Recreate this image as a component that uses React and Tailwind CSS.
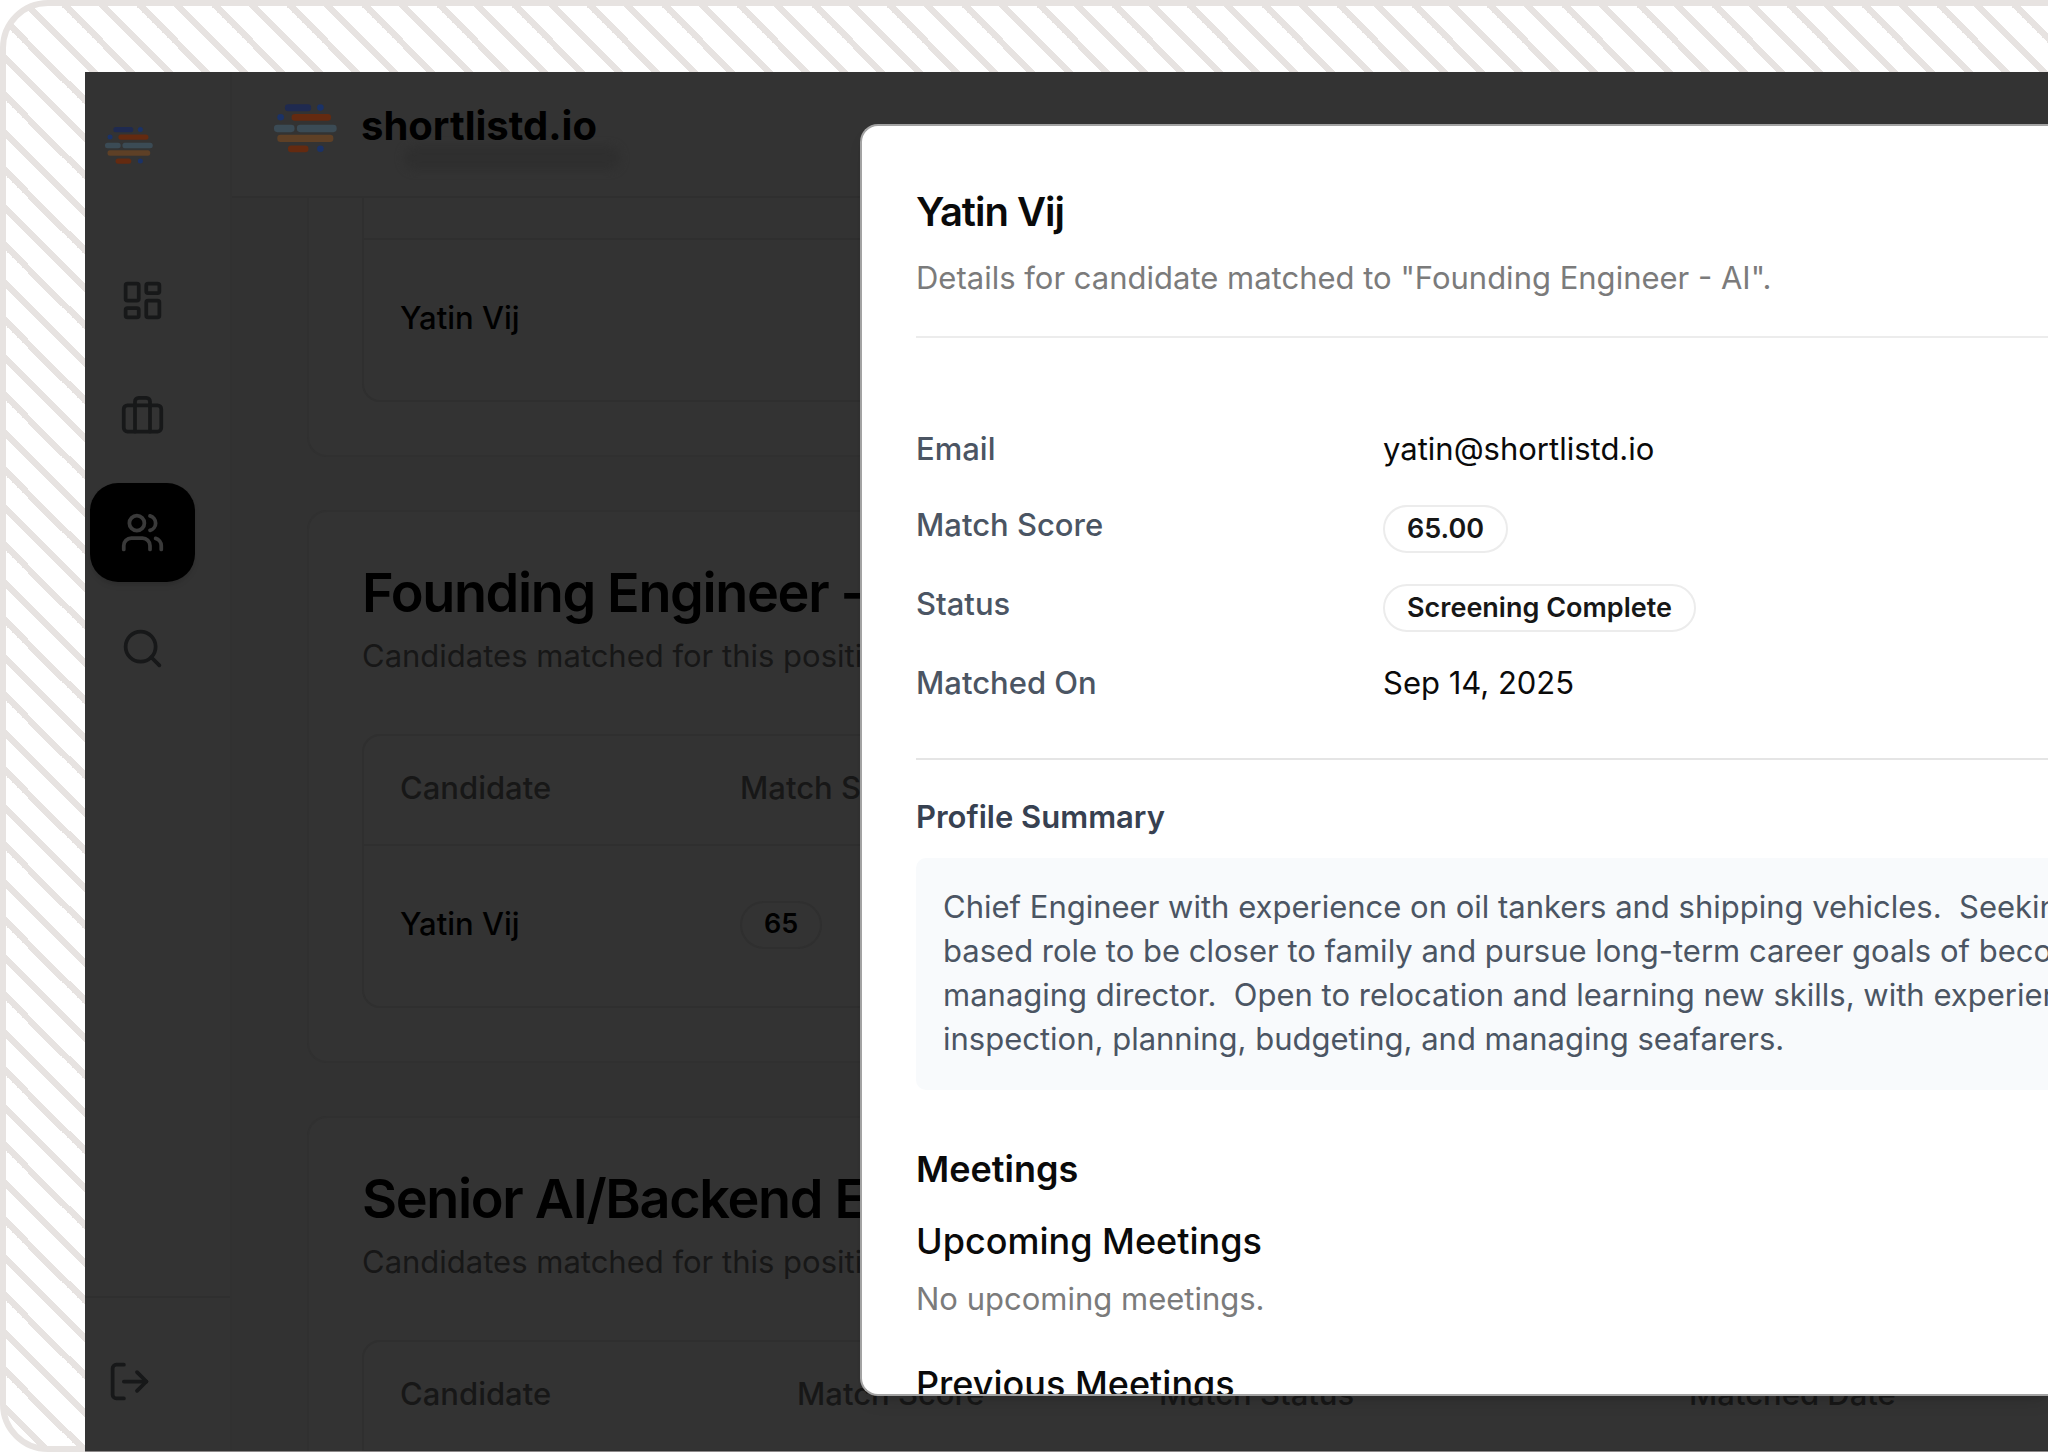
import { LayoutDashboard, Briefcase, Users, Search, LogOut } from "lucide-react";

const navItems = [
  { label: "Dashboard", icon: LayoutDashboard },
  { label: "Jobs", icon: Briefcase },
  { label: "Candidates", icon: Users, active: true },
  { label: "Search", icon: Search },
];

const Logo = ({ className }) => (
  <svg viewBox="0 0 190 146" className={className} aria-hidden="true">
    <rect x="33" y="0" width="79" height="21" rx="10" fill="#1f2a50" />
    <circle cx="140" cy="10" r="10" fill="#1b3266" />
    <circle cx="20" cy="39" r="10" fill="#1b3266" />
    <rect x="53" y="29" width="119" height="21" rx="10" fill="#642a10" />
    <rect x="0" y="62" width="62" height="22" rx="10" fill="#3b4b55" />
    <rect x="69" y="62" width="120" height="22" rx="10" fill="#3b4b55" />
    <rect x="10" y="92" width="169" height="22" rx="10" fill="#5e4026" />
    <rect x="42" y="124" width="62" height="21" rx="10" fill="#642a10" />
    <circle cx="140" cy="134" r="10" fill="#1b3266" />
  </svg>
);

const Sidebar = () => (
  <aside className="flex w-[147px] shrink-0 flex-col border-r-2 border-[#313131]">
    <a href="#home" aria-label="Home" className="mt-[55px] ml-5 block">
      <Logo className="h-[37px] w-12" />
    </a>
    <nav className="mt-[87px] ml-[5px] flex flex-col gap-[17px]">
      {navItems.map(({ label, icon: Icon, active }) => (
        <a
          key={label}
          href={`#${label.toLowerCase()}`}
          aria-label={label}
          className={
            active
              ? "flex h-[99px] w-[105px] items-center justify-center rounded-[28px] bg-black text-[#3a3a3a] shadow-md"
              : "flex h-[99px] w-[105px] items-center justify-center rounded-[28px] text-[#171819]"
          }
        >
          <Icon size={45} />
        </a>
      ))}
    </nav>
    <div className="mt-auto h-[155px] border-t-2 border-[#2f2f2f] pt-[61px] pl-[22px]">
      <button type="button" aria-label="Log out" className="block text-[#171819]">
        <LogOut size={45} />
      </button>
    </div>
  </aside>
);

const JobCard = ({ title, columns, score, widths }) => (
  <section className="rounded-[20px] border-2 border-[#303030] bg-[#333333] p-[53px]">
    {title && (
      <div className="mb-[56px]">
        <h2 className="text-[54px] leading-[56px] font-semibold tracking-tight whitespace-nowrap text-black">
          {title}
        </h2>
        <p className="mt-[13px] text-[31px] leading-[44px] text-[#171717]">
          Candidates matched for this position.
        </p>
      </div>
    )}
    <div className="overflow-hidden rounded-[18px] border-2 border-[#2f2f2f]">
      <table className="w-full table-fixed text-left text-[31px]">
        <colgroup>
          {widths.map((w, i) => (
            <col key={i} className={w} />
          ))}
        </colgroup>
        <thead>
          <tr className="h-[109px] border-b-2 border-[#2f2f2f] text-[#171717]">
            {columns.map((c, i) => (
              <th key={i} className="pb-1 pl-9 font-medium whitespace-nowrap">
                {c}
              </th>
            ))}
          </tr>
        </thead>
        <tbody>
          <tr className="h-[161px] text-black">
            <td className="pb-1 pl-9 font-medium">Yatin Vij</td>
            <td className="pb-1 pl-9">
              {score && (
                <span className="inline-flex h-12 items-center rounded-full border-2 border-[#2f2f2f] px-[22px] text-[27px] font-semibold">
                  {score}
                </span>
              )}
            </td>
            <td />
            <td />
          </tr>
        </tbody>
      </table>
    </div>
  </section>
);

const columns = ["Candidate", "Match Score", "Match Status", "Matched Date"];

const Board = () => (
  <div className="flex h-full">
    <Sidebar />
    <div className="flex min-w-0 flex-1 flex-col">
      <header className="relative flex h-[126px] shrink-0 items-start border-b-2 border-[#2f2f2f] pt-8 pl-[42px]">
        <div className="absolute top-[74px] left-[172px] h-6 w-[216px] rounded-full bg-[#2f2f2f] blur-xs" />
        <Logo className="h-[49px] w-[63px]" />
        <h1 className="relative ml-6 text-[40px] leading-[44px] font-bold text-black">
          shortlistd.io
        </h1>
      </header>
      <main className="flex min-h-0 flex-1 flex-col overflow-hidden bg-[#323232] pl-[75px]">
        {/* list is scrolled, so the first card starts above the header */}
        <div className="-mt-[125px] flex w-[2400px] shrink-0 flex-col gap-[53px]">
          <JobCard
            columns={["", "", "", ""]}
            widths={["w-[340px]", "w-[362px]", "w-[530px]", ""]}
          />
          <JobCard
            title="Founding Engineer - AI"
            columns={columns}
            score="65"
            widths={["w-[340px]", "w-[362px]", "w-[530px]", ""]}
          />
          <JobCard
            title="Senior AI/Backend Engineer"
            columns={columns}
            widths={["w-[397px]", "w-[362px]", "w-[530px]", ""]}
          />
        </div>
      </main>
    </div>
  </div>
);

const Badge = ({ children }) => (
  <span className="inline-flex h-12 items-center rounded-full border-2 border-[#ececec] px-[22px] text-[27px] font-semibold text-[#171717]">
    {children}
  </span>
);

const CandidateDialog = () => (
  <div
    role="dialog"
    aria-labelledby="candidate-name"
    className="absolute top-[52px] right-0 bottom-[55px] left-[775px] overflow-hidden rounded-l-[18px] border-2 border-r-0 border-[#a3a3a3] bg-white pl-[54px] text-[31px] text-[#0a0a0a] shadow-lg"
  >
    <h2
      id="candidate-name"
      className="mt-[62px] text-[40px] leading-[48px] font-semibold tracking-tight"
    >
      Yatin Vij
    </h2>
    <p className="mt-5 leading-[44px] text-[#7b7b7b]">
      Details for candidate matched to "Founding Engineer - AI".
    </p>
    <hr className="mt-9 border-t-2 border-[#ececec]" />
    <dl className="mt-[89px] grid grid-cols-[467px_1fr] gap-y-8 leading-[44px]">
      <dt className="font-medium text-[#4b5563]">Email</dt>
      <dd>yatin@shortlistd.io</dd>
      <dt className="font-medium text-[#4b5563]">Match Score</dt>
      <dd className="flex h-[47px] pt-0.5">
        <Badge>65.00</Badge>
      </dd>
      <dt className="font-medium text-[#4b5563]">Status</dt>
      <dd className="flex h-[47px] pt-0.5">
        <Badge>Screening Complete</Badge>
      </dd>
      <dt className="font-medium text-[#4b5563]">Matched On</dt>
      <dd>Sep 14, 2025</dd>
    </dl>
    <hr className="mt-[53px] border-t-2 border-[#e5e5e5]" />
    <h3 className="mt-[35px] leading-[44px] font-semibold text-[#374151]">
      Profile Summary
    </h3>
    <p className="mt-[19px] rounded-l-[10px] bg-[#f8fafc] pt-[27px] pb-[29px] pl-[27px] leading-[44px] whitespace-pre text-[#4b5563]">
      {`Chief Engineer with experience on oil tankers and shipping vehicles.  Seeking a shore
based role to be closer to family and pursue long-term career goals of becoming a
managing director.  Open to relocation and learning new skills, with experience in
inspection, planning, budgeting, and managing seafarers.`}
    </p>
    <h3 className="mt-[52px] text-[36px] leading-[54px] font-semibold">Meetings</h3>
    <h4 className="mt-[18px] text-[36px] leading-[54px] font-medium">Upcoming Meetings</h4>
    <p className="mt-[9px] leading-[44px] text-[#7b7b7b]">No upcoming meetings.</p>
    <h4 className="mt-9 text-[36px] leading-[54px] font-medium">Previous Meetings</h4>
  </div>
);

const App = () => {
  return (
    <div className="relative h-screen min-h-[1200px] overflow-hidden bg-white pt-[72px] pl-[85px] font-[Inter,sans-serif]">
      {/* striped frame, runs off the right side */}
      <div className="absolute inset-y-0 left-0 -right-16 rounded-[48px] border-[6px] border-[#e7e3e1] bg-[repeating-linear-gradient(45deg,#e7e3e1_0%,#e7e3e1_3%,transparent_3%,transparent_22%,#e7e3e1_22%,#e7e3e1_25%)] bg-[length:75px_75px] bg-[position:22px_0px]" />
      <div className="relative h-full border-b border-[#8c8889] bg-[#333333]">
        <Board />
        <CandidateDialog />
      </div>
    </div>
  );
};

export default App;
